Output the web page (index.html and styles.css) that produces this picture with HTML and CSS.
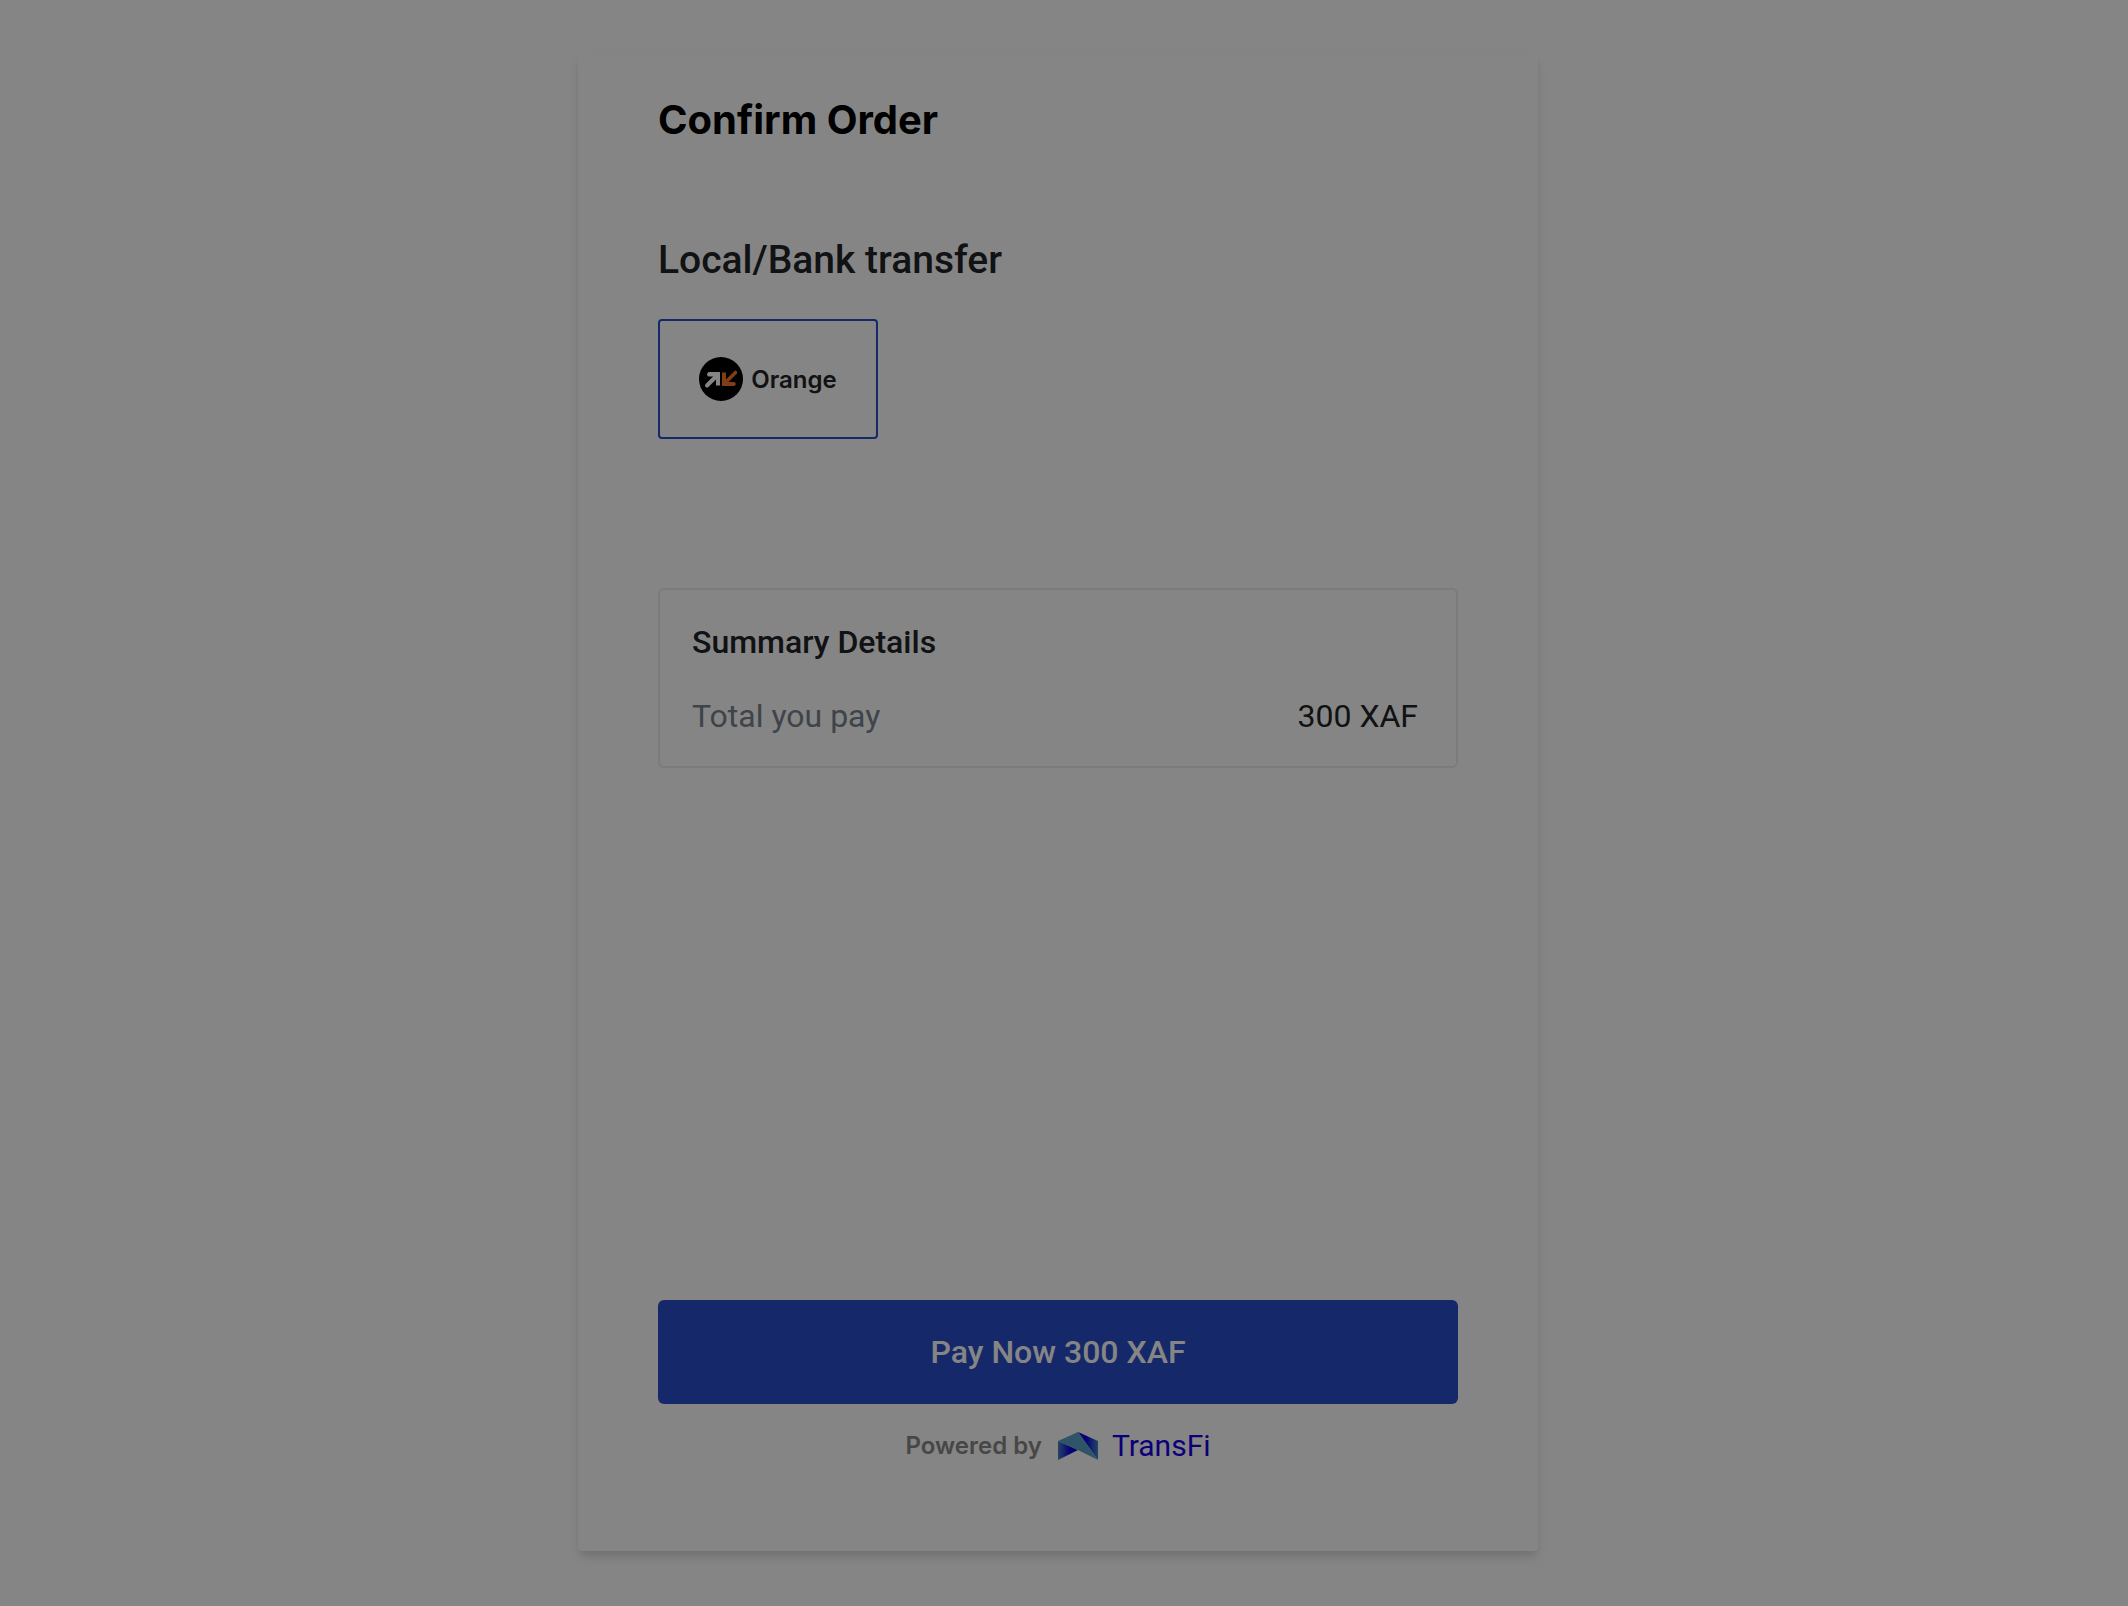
FILE: index.html
```html
<!DOCTYPE html>
<html lang="en">
<head>
    <meta charset="UTF-8">
    <meta name="viewport" content="width=device-width, initial-scale=1.0">
    <title>Confirm Order</title>
    <link rel="stylesheet" href="styles.css">
</head>
<body>
    <main class="page">
        <form class="card" id="orderForm">
            <h1>Confirm Order</h1>

            <h2>Local/Bank transfer</h2>
            <button type="button" class="method" aria-pressed="true">
                <svg class="method-icon" viewBox="0 0 44 44" aria-hidden="true">
                    <circle cx="22" cy="22" r="22" fill="#000"/>
                    <path d="M8 28.500L17.500 19" stroke="#fff" stroke-width="4" stroke-linecap="round"/>
                    <path d="M9.500 15H21V28.500H17V19.500H9.500Q6.500 17.500 9.500 15Z" fill="#fff"/>
                    <path d="M36.500 15.500L26.500 25.500" stroke="#f47a25" stroke-width="3.600" stroke-linecap="round"/>
                    <path d="M23 15.500H27V25H35.500Q38 27 35.500 29H23Z" fill="#f47a25"/>
                </svg>
                <span>Orange</span>
            </button>

            <section class="summary">
                <h3>Summary Details</h3>
                <div class="summary-row">
                    <span class="summary-label">Total you pay</span>
                    <span class="summary-value">300 XAF</span>
                </div>
            </section>

            <footer class="card-footer">
                <button type="submit" class="pay-button">Pay Now 300 XAF</button>
                <div class="powered">
                    <span>Powered by</span>
                    <svg class="brand-icon" viewBox="0 0 40 28" aria-hidden="true">
                        <defs>
                            <linearGradient id="left" x1="0" x2="1" y1="0" y2="0">
                                <stop offset="0" stop-color="#4585c0"/>
                                <stop offset="0.600" stop-color="#0d00e0"/>
                            </linearGradient>
                            <linearGradient id="right" x1="0" x2="1" y1="0" y2="0">
                                <stop offset="0.400" stop-color="#0d00e0"/>
                                <stop offset="1" stop-color="#4585c0"/>
                            </linearGradient>
                            <linearGradient id="top" x1="0" x2="1" y1="0" y2="1">
                                <stop offset="0" stop-color="#5ba2c6"/>
                                <stop offset="1" stop-color="#5ba2c6"/>
                            </linearGradient>
                        </defs>
                        <path d="M0 9V28L20 18Z" fill="url(#left)"/>
                        <path d="M20 0L40 9V28Z" fill="url(#right)"/>
                        <path d="M0 9L20 0L40 28L20 18Z" fill="url(#top)"/>
                    </svg>
                    <span class="brand-name">TransFi</span>
                </div>
            </footer>
        </form>
    </main>

    <div class="backdrop"></div>
</body>
</html>
```

FILE: styles.css
```css
* {
    box-sizing: border-box;
}

body {
    margin: 0;
    font-family: Roboto, "Liberation Sans", sans-serif;
    color: #212328;
    background-color: #fff;
}

.page {
    display: flex;
    justify-content: center;
    min-height: 100vh;
    padding: 54px 12px 55px 0;
}

.card {
    display: flex;
    flex-direction: column;
    width: 100%;
    max-width: 960px;
    padding: 40px 80px 85px;
    border-radius: 4px;
    background-color: #fff;
    box-shadow: 0 8px 12px -2px rgba(0, 0, 0, 0.1), 0 4px 8px -2px rgba(0, 0, 0, 0.1);
}

h1,
h2,
h3 {
    margin: 0;
}

h1 {
    font-family: Inter, sans-serif;
    font-size: 40px;
    line-height: 52px;
    font-weight: 700;
    color: #000;
}

h2 {
    margin-top: 88px;
    font-size: 39px;
    line-height: 52px;
    font-weight: 500;
}

.method {
    display: flex;
    align-items: center;
    justify-content: center;
    gap: 8px;
    width: 220px;
    height: 120px;
    margin-top: 33px;
    padding: 0;
    border: 2px solid #2a4dcc;
    border-radius: 4px;
    background-color: #fff;
    color: inherit;
    font-family: Inter, sans-serif;
    font-size: 24px;
    font-weight: 600;
    cursor: pointer;
}

.method-icon {
    width: 44px;
    height: 44px;
}

.summary {
    margin-top: 149px;
    padding: 30px 38px 28px 32px;
    border: 2px solid #ebebeb;
    border-radius: 6px;
}

h3 {
    font-size: 32px;
    line-height: 44px;
    font-weight: 500;
}

.summary-row {
    display: flex;
    justify-content: space-between;
    margin-top: 30px;
    font-size: 32px;
    line-height: 44px;
}

.summary-label {
    color: #798290;
}

.card-footer {
    margin-top: auto;
}

.pay-button {
    width: 100%;
    height: 104px;
    border: none;
    border-radius: 6px;
    background-color: #2a4dcc;
    color: #fff;
    font-family: inherit;
    font-size: 32px;
    font-weight: 500;
    cursor: pointer;
}

.powered {
    display: flex;
    align-items: center;
    justify-content: center;
    margin-top: 22px;
    color: #888;
    font-family: Inter, sans-serif;
    font-size: 24px;
    line-height: 40px;
    font-weight: 600;
}

.brand-icon {
    width: 40px;
    height: 28px;
    margin: 0 14px 0 16px;
}

.brand-name {
    color: #1800e6;
    font-family: Roboto, sans-serif;
    font-size: 30px;
    font-weight: 400;
}

.backdrop {
    position: fixed;
    inset: 0;
    background-color: rgba(0, 0, 0, 0.48);
}
```
